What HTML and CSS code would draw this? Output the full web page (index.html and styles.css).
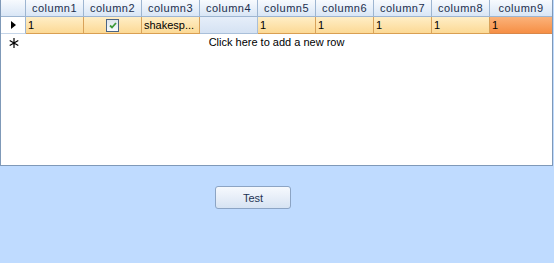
FILE: index.html
```html
<!DOCTYPE html>
<html lang="en">
<head>
    <meta charset="UTF-8">
    <title>DataGrid Test</title>
    <link rel="stylesheet" href="styles.css">
</head>
<body>
    <div class="grid">
        <div class="row header">
            <div class="cell corner"></div>
            <div class="cell">column1</div>
            <div class="cell">column2</div>
            <div class="cell">column3</div>
            <div class="cell">column4</div>
            <div class="cell">column5</div>
            <div class="cell">column6</div>
            <div class="cell">column7</div>
            <div class="cell">column8</div>
            <div class="cell last">column9</div>
        </div>
        <div class="row data">
            <div class="cell rowhead"><span class="arrow"></span></div>
            <div class="cell">1</div>
            <div class="cell check"><span class="checkbox">
                <svg width="8" height="7" viewBox="0 0 8 7"><path d="M1 3.5 L3 5.5 L7 1" fill="none" stroke="#3f9a3a" stroke-width="1.8"/></svg>
            </span></div>
            <div class="cell" title="shakespeare">shakesp...</div>
            <div class="cell empty"></div>
            <div class="cell">1</div>
            <div class="cell">1</div>
            <div class="cell">1</div>
            <div class="cell">1</div>
            <div class="cell last current">1</div>
        </div>
        <div class="row newrow">
            <div class="cell rowhead">
                <svg width="10" height="10" viewBox="0 0 10 10"><path d="M5 0 V10 M0.7 2.5 L9.3 7.5 M0.7 7.5 L9.3 2.5" stroke="#000" stroke-width="1.2"/></svg>
            </div>
            <div class="addrow">Click here to add a new row</div>
        </div>
    </div>
    <div class="actions">
        <button class="btn">Test</button>
    </div>
</body>
</html>
```

FILE: styles.css
```css
body {
    margin: 0;
    width: 554px;
    height: 263px;
    background-color: #bfdbff;
    font-family: "Liberation Sans", Arial, sans-serif;
    font-size: 11px;
    color: #000;
}
.grid {
    box-sizing: border-box;
    width: 553px;
    height: 166px;
    background: #fff;
    border: 1px solid #7f99b8;
    border-top: none;
}
.row {
    display: grid;
    grid-template-columns: 25px repeat(8, 58px) 1fr;
    height: 17px;
}
.cell {
    box-sizing: border-box;
    border-right: 1px solid #c5d5e8;
    border-bottom: 1px solid #c5d5e8;
    white-space: nowrap;
    overflow: hidden;
    line-height: 16px;
    padding: 0 2px;
}
.header .cell {
    text-align: center;
    color: #1b2e4c;
    letter-spacing: 0.5px;
    background: linear-gradient(#f7fafe, #d9e6f6);
    border-right-color: #9db5d1;
    border-bottom-color: #9db5d1;
}
.header .corner {
    background: linear-gradient(#f7fafe, #d9e6f6);
}
.cell.last {
    border-right: none;
}
.rowhead {
    display: flex;
    align-items: center;
    justify-content: center;
    padding: 0;
    background: #fff;
    border-bottom: none;
    border-right-color: #9db5d1;
}
.arrow {
    width: 0;
    height: 0;
    border-left: 5px solid #000;
    border-top: 4px solid transparent;
    border-bottom: 4px solid transparent;
}
.data .cell {
    background: linear-gradient(#ffeec6, #fcd995);
    border-right-color: #d8a25a;
    border-bottom-color: #d99f52;
}
.data .rowhead {
    background: #fff;
    border-right-color: #9db5d1;
    border-bottom: 1px solid #c5d5e8;
}
.data .empty {
    background: linear-gradient(#e6eef9, #d5e2f3);
    border-right-color: #a9bfd9;
    border-bottom-color: #a9bfd9;
}
.data .current {
    background: linear-gradient(#fbb27a, #f68f45);
    border-bottom-color: #d9874a;
}
.check {
    display: flex;
    align-items: center;
    justify-content: center;
}
.checkbox {
    box-sizing: border-box;
    width: 13px;
    height: 13px;
    border: 1px solid #4a6484;
    background: linear-gradient(#dfe5ec, #f8fbfd);
    display: flex;
    align-items: center;
    justify-content: center;
}
.newrow .rowhead {
    border-right: none;
}
.addrow {
    grid-column: 2 / -1;
    padding-right: 25px;
    text-align: center;
    line-height: 16px;
}
.actions {
    padding: 20px 0 0 215px;
}
.btn {
    box-sizing: border-box;
    width: 76px;
    height: 23px;
    border: 1px solid #8ca4c4;
    border-radius: 3px;
    background: linear-gradient(#f6f9fd 0%, #e7eef8 50%, #d6e3f3 100%);
    font-family: "Liberation Sans", Arial, sans-serif;
    font-size: 11px;
    color: #1e3454;
    padding: 0;
}
```
